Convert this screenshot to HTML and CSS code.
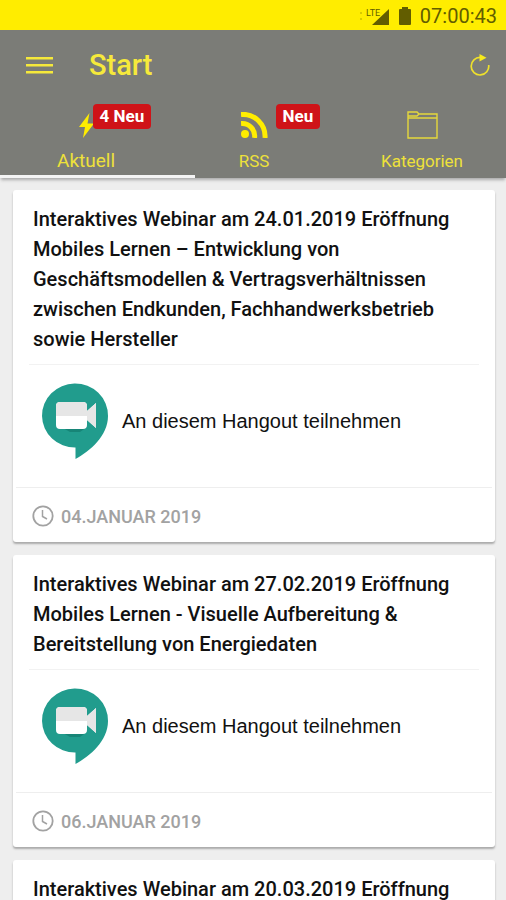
FILE: index.html
```html
<!DOCTYPE html>
<html lang="de">
<head>
<meta charset="utf-8">
<meta name="viewport" content="width=device-width, initial-scale=1">
<title>Start</title>
<link rel="stylesheet" href="styles.css">
</head>
<body>
<svg class="defs" aria-hidden="true">
  <symbol id="meet" viewBox="0 0 68 78">
    <path fill="#219c8d" d="M33.500 1.500A33 32 0 0 1 67 34C67 54 49 69 34.500 77V65.500A33 32 0 0 1 33.500 1.500Z"/>
    <path fill="#178577" d="M22 46L29 50H39L46 45Z"/>
    <path fill="#fff" d="M19 20H42Q46 20 46 24V29L55 21V46L46 38V43Q46 47 42 47H19Q15 47 15 43V24Q15 20 19 20Z"/>
    <path fill="#e6e6e6" d="M19 20H42Q46 20 46 24V29L55 21V46L46 38V34H15V24Q15 20 19 20Z"/>
  </symbol>
  <symbol id="clock" viewBox="0 0 22 22">
    <g fill="none" stroke="#a2a2a2"><circle cx="11" cy="11" r="9.700" stroke-width="1.800"/><path d="M10.500 5V11.500L15 14" stroke-width="1.500"/></g>
  </symbol>
</svg>
<div class="app">
  <div class="status">
    <svg class="signal" viewBox="0 0 34 20" aria-hidden="true">
      <path fill="#625d00" d="M33 3V19H16Z"/>
      <path fill="#d8ca00" d="M4 6h2v2h-2zM4 12h2v2h-2z"/>
      <text x="10" y="10">LTE</text>
    </svg>
    <svg class="battery" viewBox="0 0 12 18" aria-hidden="true"><path fill="#625d00" d="M3 0H9V2H11Q12 2 12 3V17Q12 18 11 18H1Q0 18 0 17V3Q0 2 1 2H3Z"/></svg>
    <time>07:00:43</time>
  </div>
  <header class="bar">
    <button class="icon-button" type="button" aria-label="Menü">
      <svg class="menu" viewBox="0 0 27 18"><path fill="#f6e93b" d="M0 1h27v2.500H0zM0 8h27v2.500H0zM0 15h27v2.500H0z"/></svg>
    </button>
    <h1>Start</h1>
    <button class="icon-button" type="button" aria-label="Aktualisieren">
      <svg class="reload" viewBox="0 0 20 22"><path fill="none" stroke="#eee02c" stroke-width="1.700" d="M18.700 11A8.800 8.800 0 1 1 10.500 3.400"/><path fill="#f7ea1c" d="M9.500 0L16.500 3.700L9.500 7.500Z"/></svg>
    </button>
  </header>
  <nav class="tabs">
    <a class="tab active" href="#aktuell">
      <span class="tab-icon">
        <svg class="bolt" viewBox="0 0 15 25"><path fill="#ffed00" d="M10.500 0L0 14H6L4 25L15 10.500H8.500Z"/></svg>
        <span class="badge">4 Neu</span>
      </span>
      <span>Aktuell</span>
    </a>
    <a class="tab" href="#rss">
      <span class="tab-icon">
        <svg class="rss" viewBox="0 0 27 26"><circle cx="4" cy="22" r="4" fill="#ffed00"/><path fill="none" stroke="#ffed00" stroke-width="5" d="M0 11.500A12.500 12.500 0 0 1 13.500 26M0 2.500A22 22 0 0 1 24 26"/></svg>
        <span class="badge wide">Neu</span>
      </span>
      <span>RSS</span>
    </a>
    <a class="tab" href="#kategorien">
      <span class="tab-icon">
        <svg class="folder" viewBox="0 0 31 28"><path fill="none" stroke="#e5d83c" stroke-width="1.400" d="M1 1H10L12 3H30V27H1ZM1 7H30M1 5H10L12 3"/></svg>
      </span>
      <span>Kategorien</span>
    </a>
    <span class="indicator"></span>
  </nav>
  <main>
    <article class="card">
      <h2>Interaktives Webinar am 24.01.2019 Eröffnung Mobiles Lernen – Entwicklung von Geschäftsmodellen &amp; Vertragsverhältnissen zwischen Endkunden, Fachhandwerksbetrieb sowie Hersteller</h2>
      <a class="join" href="#hangout-1"><svg><use href="#meet"/></svg>An diesem Hangout teilnehmen</a>
      <footer><svg><use href="#clock"/></svg><time datetime="2019-01-04">04.JANUAR 2019</time></footer>
    </article>
    <article class="card">
      <h2>Interaktives Webinar am 27.02.2019 Eröffnung Mobiles Lernen - Visuelle Aufbereitung &amp; Bereitstellung von Energiedaten</h2>
      <a class="join" href="#hangout-2"><svg><use href="#meet"/></svg>An diesem Hangout teilnehmen</a>
      <footer><svg><use href="#clock"/></svg><time datetime="2019-01-06">06.JANUAR 2019</time></footer>
    </article>
    <article class="card">
      <h2>Interaktives Webinar am 20.03.2019 Eröffnung</h2>
    </article>
  </main>
</div>
</body>
</html>
```
FILE: styles.css
```css
* { box-sizing: border-box; }
body {
  margin: 0;
  font-family: Roboto, "Liberation Sans", sans-serif;
  background: #eee;
  color: #111;
}
a { color: inherit; text-decoration: none; }
svg { display: block; flex: none; }
.defs { position: absolute; width: 0; height: 0; }
.app { display: flex; flex-direction: column; height: 100vh; overflow: hidden; }

.status {
  display: flex;
  flex: none;
  align-items: center;
  justify-content: flex-end;
  gap: 9px;
  height: 30px;
  padding: 1px 9px 0;
  background: #ffed00;
  color: #625d00;
  font-size: 20px;
}
.signal { width: 34px; height: 20px; }
.signal text { font-size: 9px; fill: #625d00; }
.battery { width: 12px; height: 18px; }

.bar {
  display: flex;
  flex: none;
  align-items: center;
  height: 70px;
  padding: 0 16px 0 26px;
  background: #7b7c77;
  color: #f6e93b;
}
.bar h1 { flex: 1; margin: 0 0 0 36px; font-size: 29px; font-weight: 500; }
.icon-button { padding: 0; border: 0; background: none; }
.menu { width: 27px; height: 18px; }
.reload { width: 20px; height: 22px; }

.tabs {
  position: relative;
  z-index: 1;
  display: grid;
  flex: none;
  grid-template-columns: repeat(3, 1fr);
  height: 78px;
  padding-left: 2px;
  background: #7b7c77;
  color: #eee13a;
  font-size: 17px;
  box-shadow: 0 3px 3px -1px #aaa;
}
.tab { display: flex; flex-direction: column; align-items: center; line-height: 22px; }
.tab.active { font-size: 19px; }
.tab-icon { position: relative; display: flex; align-items: center; height: 50px; }
.bolt { width: 15px; height: 25px; }
.rss { width: 27px; height: 26px; }
.folder { width: 31px; height: 28px; }
.badge {
  position: absolute;
  top: 4px;
  left: 14px;
  padding: 0 7px;
  border-radius: 4px;
  background: #cf1318;
  color: #fff;
  font-size: 17px;
  font-weight: 700;
  line-height: 25px;
  white-space: nowrap;
}
.badge.wide { left: 35px; }
.indicator { position: absolute; bottom: 0; left: 0; width: 38.5%; height: 3px; background: #f4f4f4; }

main { display: flex; flex: 1; flex-direction: column; gap: 13px; min-height: 0; padding: 12px 11px 0 13px; overflow: hidden; }
.card { flex: none; border-radius: 3px; background: #fff; box-shadow: 0 2px 2px #aaa; }
.card h2 {
  margin: 0 16px;
  padding: 14px 4px 10px;
  font-size: 20px;
  font-weight: 500;
  line-height: 30px;
}
.join {
  display: flex;
  align-items: center;
  gap: 13px;
  height: 123px;
  margin: 0 16px;
  padding: 0 12px 10px;
  border-top: 1px solid #f2f2f2;
  font-size: 20px;
  font-family: "Liberation Sans", sans-serif;
}
.join svg { width: 68px; height: 78px; }
.card footer {
  display: flex;
  align-items: center;
  gap: 7px;
  height: 55px;
  margin: 0 3px;
  padding: 2px 16px 0;
  border-top: 1px solid #eee;
  color: #a2a2a2;
  font-size: 18px;
  font-weight: 500;
}
.card footer svg { width: 22px; height: 22px; }
```
